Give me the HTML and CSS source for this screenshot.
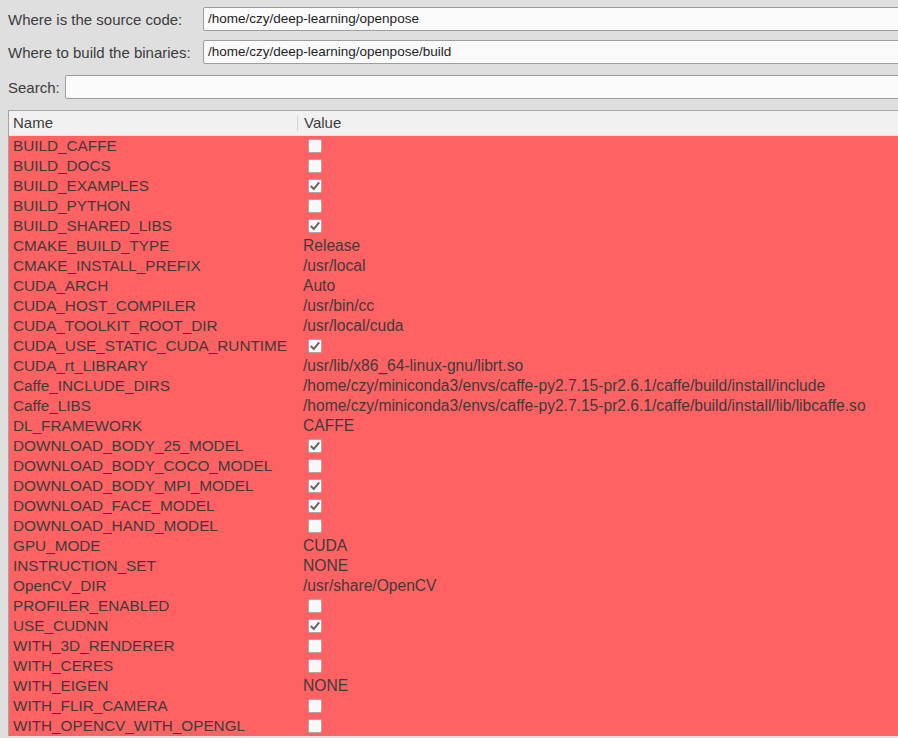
FILE: index.html
```html
<!DOCTYPE html>
<html lang="en">
<head>
    <meta charset="UTF-8">
    <title>CMake</title>
    <link rel="stylesheet" href="styles.css">
</head>
<body>
    <div class="app">
        <div class="paths">
            <label class="path-label">Where is the source code:</label>
            <div class="field">/home/czy/deep-learning/openpose</div>
            <label class="path-label">Where to build the binaries:</label>
            <div class="field">/home/czy/deep-learning/openpose/build</div>
        </div>
        <div class="search">
            <label class="path-label">Search:</label>
            <div class="field"></div>
        </div>
        <div class="cache">
            <div class="cache-head">
                <div class="col-name">Name</div>
                <div class="col-value">Value</div>
            </div>
            <div class="cache-body" id="cache-body"></div>
        </div>
    </div>
    <script>
        // name, value (true/false = checkbox)
        const entries = [
            ['BUILD_CAFFE', false],
            ['BUILD_DOCS', false],
            ['BUILD_EXAMPLES', true],
            ['BUILD_PYTHON', false],
            ['BUILD_SHARED_LIBS', true],
            ['CMAKE_BUILD_TYPE', 'Release'],
            ['CMAKE_INSTALL_PREFIX', '/usr/local'],
            ['CUDA_ARCH', 'Auto'],
            ['CUDA_HOST_COMPILER', '/usr/bin/cc'],
            ['CUDA_TOOLKIT_ROOT_DIR', '/usr/local/cuda'],
            ['CUDA_USE_STATIC_CUDA_RUNTIME', true],
            ['CUDA_rt_LIBRARY', '/usr/lib/x86_64-linux-gnu/librt.so'],
            ['Caffe_INCLUDE_DIRS', '/home/czy/miniconda3/envs/caffe-py2.7.15-pr2.6.1/caffe/build/install/include'],
            ['Caffe_LIBS', '/home/czy/miniconda3/envs/caffe-py2.7.15-pr2.6.1/caffe/build/install/lib/libcaffe.so'],
            ['DL_FRAMEWORK', 'CAFFE'],
            ['DOWNLOAD_BODY_25_MODEL', true],
            ['DOWNLOAD_BODY_COCO_MODEL', false],
            ['DOWNLOAD_BODY_MPI_MODEL', true],
            ['DOWNLOAD_FACE_MODEL', true],
            ['DOWNLOAD_HAND_MODEL', false],
            ['GPU_MODE', 'CUDA'],
            ['INSTRUCTION_SET', 'NONE'],
            ['OpenCV_DIR', '/usr/share/OpenCV'],
            ['PROFILER_ENABLED', false],
            ['USE_CUDNN', true],
            ['WITH_3D_RENDERER', false],
            ['WITH_CERES', false],
            ['WITH_EIGEN', 'NONE'],
            ['WITH_FLIR_CAMERA', false],
            ['WITH_OPENCV_WITH_OPENGL', false]
        ];

        const tick = '<svg viewBox="0 0 14 14" width="14" height="14"><path d="M2.8 7 L5.8 10 L11.2 3.4" fill="none" stroke="#666666" stroke-width="2"/></svg>';

        const body = document.getElementById('cache-body');
        entries.forEach(function(e) {
            const row = document.createElement('div');
            row.className = 'cache-row';
            let value;
            if (typeof e[1] === 'boolean') {
                value = '<span class="check">' + (e[1] ? tick : '') + '</span>';
            } else {
                value = e[1];
            }
            row.innerHTML = '<div class="col-name">' + e[0] + '</div><div class="col-value">' + value + '</div>';
            body.appendChild(row);
        });
    </script>
</body>
</html>
```

FILE: styles.css
```css
body {
    margin: 0;
    background: #dfdfdf;
    font-family: "Liberation Sans", sans-serif;
    font-size: 15px;
    color: #3c3c3c;
    overflow: hidden;
    width: 898px;
    height: 738px;
}

.app {
    width: 940px;
    padding: 7px 0 0 8px;
}

.paths {
    display: grid;
    grid-template-columns: 195px 1fr;
    row-gap: 9px;
    align-items: center;
}

.path-label {
    white-space: nowrap;
}

.field {
    height: 22px;
    line-height: 22px;
    border: 1px solid #9d9d9d;
    border-radius: 2px;
    background: #fafafa;
    padding: 0 4px;
    font-size: 13.5px;
    color: #1e1e1e;
}

.search {
    display: flex;
    align-items: center;
    gap: 5px;
    margin-top: 11px;
}

.search .field {
    flex: 1;
}

.cache {
    margin-top: 11px;
    border-left: 1px solid #a4a4a4;
    border-top: 1px solid #a4a4a4;
    background: #ffffff;
}

.cache-head {
    display: flex;
    height: 24px;
    background: #f1f1f1;
    border-bottom: 1px solid #e2e2e2;
}

.cache-head .col-name {
    border-right: 1px solid #d6d6d6;
    margin: 4px 0;
    line-height: 16px;
}

.cache-head .col-value {
    margin: 4px 0;
    line-height: 16px;
}

.cache-row {
    display: flex;
    height: 20px;
    line-height: 20px;
    background: #ff6262;
    white-space: nowrap;
}

.col-name {
    width: 284px;
    padding-left: 4px;
    flex-shrink: 0;
}

.cache-row .col-name {
    font-size: 15.3px;
}

.col-value {
    padding-left: 6px;
}

.cache-row .col-value {
    font-size: 15.6px;
}

.check {
    display: inline-block;
    width: 12px;
    height: 12px;
    margin-left: 5px;
    margin-top: 3px;
    vertical-align: top;
    border: 1px solid #a8a8a8;
    border-radius: 2px;
    background: #f8f8f8;
    position: relative;
}

.check svg {
    position: absolute;
    left: -1px;
    top: -1px;
}
```
